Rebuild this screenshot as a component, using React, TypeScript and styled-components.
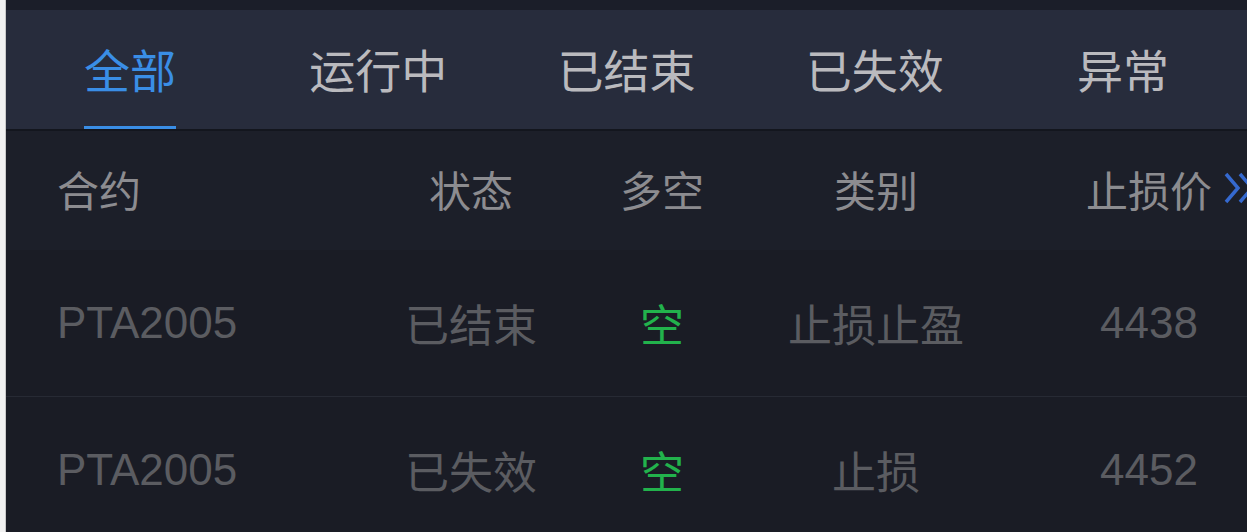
import styled, { createGlobalStyle } from 'styled-components';

const GlobalStyle = createGlobalStyle`
  html, body {
    margin: 0;
    padding: 0;
    background: #1a1c25;
  }
  body {
    font-family: "Liberation Sans", "Noto Sans CJK SC", Arial, sans-serif;
  }
`;

type Order = {
  contract: string;
  status: string;
  side: string;
  kind: string;
  price: string;
};

const tabs = ['全部', '运行中', '已结束', '已失效', '异常'];

const orders: Order[] = [
  { contract: 'PTA2005', status: '已结束', side: '空', kind: '止损止盈', price: '4438' },
  { contract: 'PTA2005', status: '已失效', side: '空', kind: '止损', price: '4452' },
];

const App = () => {
  return (
    <>
      <GlobalStyle />
      <StPage>
        <StStrip />
        <StMain>
          <StTopBar />
          <StTabBar>
            {tabs.map((t, i) => (
              <StTab key={t}>
                <StTabInner>
                  <StTabLabel $active={i === 0}>{t}</StTabLabel>
                  <StUnderline $active={i === 0} />
                </StTabInner>
              </StTab>
            ))}
          </StTabBar>
          <StHeadRow>
            <StCell $align="left">合约</StCell>
            <StCell>状态</StCell>
            <StCell>多空</StCell>
            <StCell>类别</StCell>
            <StCell>
              <StMore>
                止损价
                <StChevrons viewBox="0 0 36 40">
                  <path d="M4 6 L16 20 L4 34" />
                  <path d="M18 6 L30 20 L18 34" />
                </StChevrons>
              </StMore>
            </StCell>
          </StHeadRow>
          {orders.map((o, i) => (
            <StRow key={i}>
              <StCell $align="left" $num>{o.contract}</StCell>
              <StCell>{o.status}</StCell>
              <StCell $green>{o.side}</StCell>
              <StCell>{o.kind}</StCell>
              <StCell $num>{o.price}</StCell>
            </StRow>
          ))}
        </StMain>
      </StPage>
    </>
  );
};

export default App;

const StPage = styled.div`
  display: flex;
  width: 1247px;
  height: 532px;
  overflow: hidden;
`;

const StStrip = styled.div`
  flex: 0 0 5px;
  background: #f1f1f1;
  border-right: 1px solid #c9c9c9;
`;

const StMain = styled.div`
  flex: 1;
  display: flex;
  flex-direction: column;
  min-width: 0;
  overflow: hidden;
  > * {
    flex-shrink: 0;
  }
`;

const StTopBar = styled.div`
  height: 10px;
  background: #1b1e29;
`;

const StTabBar = styled.div`
  display: grid;
  grid-template-columns: repeat(5, 1fr);
  height: 119px;
  background: #272c3c;
  border-bottom: 2px solid #13161e;
`;

const StTab = styled.div`
  display: flex;
  justify-content: center;
`;

const StTabInner = styled.div`
  display: flex;
  flex-direction: column;
  height: 100%;
`;

const StTabLabel = styled.div<{ $active: boolean }>`
  flex: 1;
  display: flex;
  align-items: center;
  font-family: "Noto Sans CJK SC", sans-serif;
  font-size: 46px;
  color: ${(p) => (p.$active ? '#3a8ee6' : '#bababe')};
`;

const StUnderline = styled.div<{ $active: boolean }>`
  height: 3px;
  background: ${(p) => (p.$active ? '#3a8ee6' : 'transparent')};
`;

const StHeadRow = styled.div`
  display: grid;
  grid-template-columns: 372px 186px 196px 232px 314px;
  height: 119px;
  padding-bottom: 5px;
  box-sizing: border-box;
  background: #1c1f29;
  font-size: 42px;
  color: #8c8c90;
`;

const StRow = styled.div`
  display: grid;
  grid-template-columns: 372px 186px 196px 232px 314px;
  height: 146px;
  background: #1a1c25;
  border-bottom: 1px solid #272a34;
  font-size: 44px;
  color: #5b5c61;
`;

const StCell = styled.div<{ $align?: 'left' | 'center'; $green?: boolean; $num?: boolean }>`
  display: flex;
  align-items: center;
  justify-content: ${(p) => (p.$align === 'left' ? 'flex-start' : 'center')};
  padding-left: ${(p) => (p.$align === 'left' ? '51px' : '0')};
  white-space: nowrap;
  color: ${(p) => (p.$green ? '#22b24c' : 'inherit')};
  font-family: ${(p) =>
    p.$num ? '"Liberation Sans", Arial, sans-serif' : '"Noto Sans CJK SC", sans-serif'};
`;

const StMore = styled.span`
  display: inline-flex;
  align-items: center;
  margin-right: -46px;
`;

const StChevrons = styled.svg`
  width: 36px;
  height: 40px;
  margin-left: 10px;
  fill: none;
  stroke: #3569cf;
  stroke-width: 3.5;
`;
